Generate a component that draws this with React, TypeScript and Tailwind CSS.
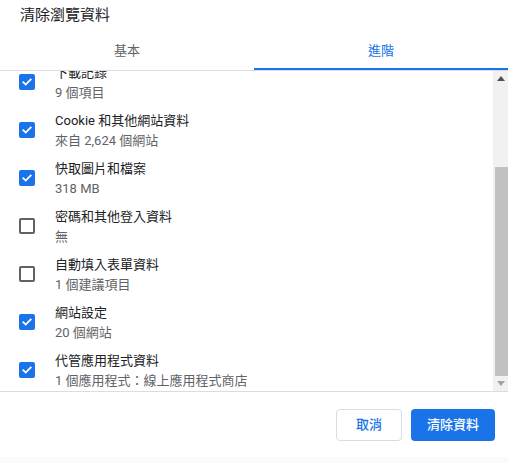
import { useState } from 'react'

interface Item {
  title: string
  detail: string
  checked: boolean
}

const initialItems: Item[] = [
  { title: '下載記錄', detail: '9 個項目', checked: true },
  { title: 'Cookie 和其他網站資料', detail: '來自 2,624 個網站', checked: true },
  { title: '快取圖片和檔案', detail: '318 MB', checked: true },
  { title: '密碼和其他登入資料', detail: '無', checked: false },
  { title: '自動填入表單資料', detail: '1 個建議項目', checked: false },
  { title: '網站設定', detail: '20 個網站', checked: true },
  { title: '代管應用程式資料', detail: '1 個應用程式：線上應用程式商店', checked: true },
]

function Checkbox({ checked, onChange }: { checked: boolean; onChange: () => void }) {
  return (
    <button
      onClick={onChange}
      className={`flex h-[16px] w-[16px] shrink-0 items-center justify-center rounded-[2px] ${
        checked ? 'bg-[#1a73e8]' : 'border-2 border-[#5f6368] bg-white'
      }`}
    >
      {checked && (
        <svg width="12" height="12" viewBox="0 0 12 12" fill="none">
          <path d="M2.3 6.2l2.4 2.4 5-5" stroke="white" strokeWidth="1.8" strokeLinecap="square" />
        </svg>
      )}
    </button>
  )
}

export default function App() {
  const [tab, setTab] = useState<'basic' | 'advanced'>('advanced')
  const [items, setItems] = useState(initialItems)

  const toggle = (i: number) => {
    setItems(items.map((it, idx) => (idx === i ? { ...it, checked: !it.checked } : it)))
  }

  return (
    <div className="flex h-[463px] w-[508px] flex-col bg-white font-['Roboto','Noto_Sans_CJK_TC',sans-serif] text-[#202124]">
      {/* Title */}
      <div className="h-[36px] px-[20px] pt-[5px] text-[15px] leading-5">清除瀏覽資料</div>

      {/* Tabs */}
      <div className="flex h-[35px] border-b border-[#dadce0]">
        {(['basic', 'advanced'] as const).map((t) => (
          <button
            key={t}
            onClick={() => setTab(t)}
            className={`flex flex-1 flex-col justify-between pt-[5px] text-[13px] leading-5 ${
              tab === t ? 'text-[#1a73e8]' : 'text-[#5f6368]'
            }`}
          >
            <span>{t === 'basic' ? '基本' : '進階'}</span>
            <span className={`h-[2px] w-full ${tab === t ? 'bg-[#1a73e8]' : ''}`} />
          </button>
        ))}
      </div>

      {/* List */}
      <div className="flex h-[321px] border-b border-[#dadce0]">
        <div className="flex-1 overflow-hidden">
          <div className="-mt-[13px]">
            {items.map((it, i) => (
              <div key={it.title} className="flex h-[48px] items-center">
                <div className="flex w-[55px] shrink-0 pl-[19px]">
                  <Checkbox checked={it.checked} onChange={() => toggle(i)} />
                </div>
                <div className="flex flex-col pb-[3px] pt-[5px] text-[13px] leading-5">
                  <span>{it.title}</span>
                  <span className="text-[#5f6368]">{it.detail}</span>
                </div>
              </div>
            ))}
          </div>
        </div>
        {/* Scrollbar */}
        <div className="flex w-[15px] flex-col bg-[#f1f1f1]">
          <div className="flex h-[15px] items-center justify-center">
            <svg width="8" height="5" viewBox="0 0 8 5">
              <path d="M0 5L4 0l4 5z" fill="#505050" />
            </svg>
          </div>
          <div className="flex flex-1 flex-col pl-[2px] pt-[81px]">
            <div className="h-[209px] bg-[#c1c1c1]" />
          </div>
          <div className="flex h-[15px] items-center justify-center">
            <svg width="8" height="5" viewBox="0 0 8 5">
              <path d="M0 0h8L4 5z" fill="#a3a3a3" />
            </svg>
          </div>
        </div>
      </div>

      {/* Footer */}
      <div className="flex flex-1 flex-col">
        <div className="flex flex-1 justify-end gap-[9px] pr-[13px] pt-[17px]">
          <button className="h-[32px] w-[66px] rounded-[4px] border border-[#dadce0] text-[13px] font-medium text-[#1a73e8]">
            取消
          </button>
          <button className="h-[32px] w-[84px] rounded-[4px] bg-[#1a73e8] text-[13px] font-medium text-white">
            清除資料
          </button>
        </div>
        <div className="h-[6px] bg-[#fafafa]" />
      </div>
    </div>
  )
}
